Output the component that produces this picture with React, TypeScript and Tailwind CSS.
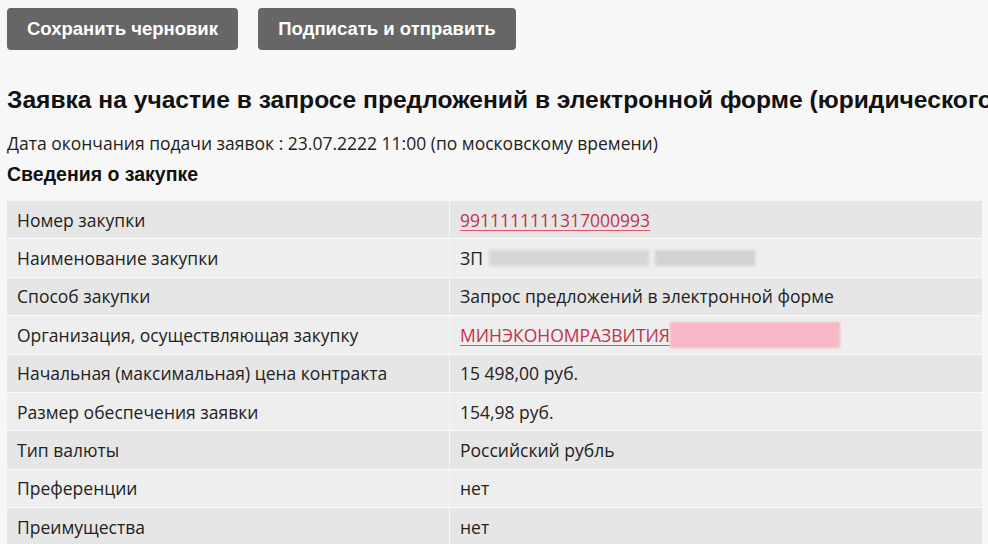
const rows: { label: string; value: React.ReactNode }[] = [
  {
    label: "Номер закупки",
    value: (
      <span className="text-[#c4314f] underline decoration-[#d9536c] underline-offset-[3px]">
        9911111111317000993
      </span>
    ),
  },
  {
    label: "Наименование закупки",
    value: (
      <span className="flex items-center gap-1.5">
        <span>ЗП</span>
        <span className="h-[16px] w-[160px] bg-[#d6d6d6] blur-[1.5px]"></span>
        <span className="h-[16px] w-[100px] bg-[#d2d2d2] blur-[1.5px]"></span>
      </span>
    ),
  },
  { label: "Способ закупки", value: "Запрос предложений в электронной форме" },
  {
    label: "Организация, осуществляющая закупку",
    value: (
      <span className="flex items-center">
        <span className="text-[#c4314f] underline decoration-[#d9536c] underline-offset-[3px]">
          МИНЭКОНОМРАЗВИТИЯ
        </span>
        <span className="h-[26px] w-[170px] bg-[#f6b8c4] blur-[1px]"></span>
      </span>
    ),
  },
  { label: "Начальная (максимальная) цена контракта", value: "15 498,00 руб." },
  { label: "Размер обеспечения заявки", value: "154,98 руб." },
  { label: "Тип валюты", value: "Российский рубль" },
  { label: "Преференции", value: "нет" },
  { label: "Преимущества", value: "нет" },
];

export default function App() {
  return (
    <div className="min-h-[544px] w-[988px] overflow-hidden bg-[#f7f7f7] font-['Open_Sans',sans-serif] text-[#222]">
      <div className="flex gap-5 pl-[7px] pt-2">
        <button className="h-[42px] w-[231px] rounded-[4px] bg-[#666666] font-['Liberation_Sans',Arial,sans-serif] text-[18.5px] font-bold text-white">
          Сохранить черновик
        </button>
        <button className="h-[42px] w-[258px] rounded-[4px] bg-[#666666] font-['Liberation_Sans',Arial,sans-serif] text-[18.5px] font-bold text-white">
          Подписать и отправить
        </button>
      </div>

      <h1 className="mt-[36px] whitespace-nowrap pl-[7px] font-['Liberation_Sans',Arial,sans-serif] text-[24.6px] font-bold leading-[28px] text-[#111]">
        Заявка на участие в запросе предложений в электронной форме (юридического лица)
      </h1>
      <p className="mt-[17px] pl-[7px] text-[17.5px] leading-[24px]">
        Дата окончания подачи заявок : 23.07.2222 11:00 (по московскому времени)
      </p>
      <h2 className="mt-[7px] pl-[7px] font-['Liberation_Sans',Arial,sans-serif] text-[19.5px] font-bold leading-[24px] text-[#111]">
        Сведения о закупке
      </h2>

      <div className="ml-[7px] mt-[15px] flex w-[975px] flex-col gap-px bg-[#fbfbfb]">
        {rows.map((r, i) => (
          <div
            key={r.label}
            className={`flex h-[37.4px] items-center ${i % 2 === 0 ? "bg-[#e6e6e6]" : "bg-[#eeeeee]"}`}
          >
            <div className="flex h-full w-[443px] items-center border-r border-[#f6f6f6] pl-[10px] text-[17.5px]">
              {r.label}
            </div>
            <div className="flex h-full items-center pl-[10px] text-[17.5px]">{r.value}</div>
          </div>
        ))}
      </div>
    </div>
  );
}
